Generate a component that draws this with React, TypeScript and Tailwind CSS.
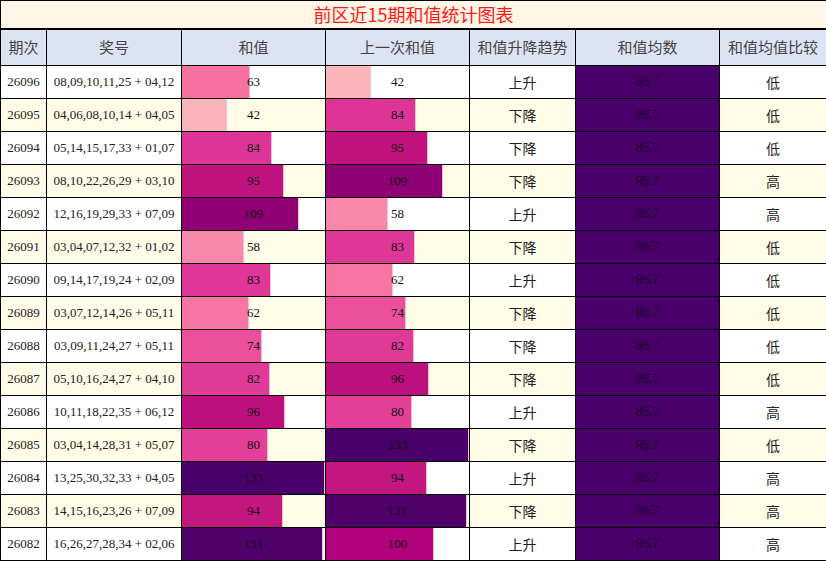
const ROWS: [string, string, number, number, string, string][] = [
  ['26096', '08,09,10,11,25 + 04,12', 63, 42, '上升', '低'],
  ['26095', '04,06,08,10,14 + 04,05', 42, 84, '下降', '低'],
  ['26094', '05,14,15,17,33 + 01,07', 84, 95, '下降', '低'],
  ['26093', '08,10,22,26,29 + 03,10', 95, 109, '下降', '高'],
  ['26092', '12,16,19,29,33 + 07,09', 109, 58, '上升', '高'],
  ['26091', '03,04,07,12,32 + 01,02', 58, 83, '下降', '低'],
  ['26090', '09,14,17,19,24 + 02,09', 83, 62, '上升', '低'],
  ['26089', '03,07,12,14,26 + 05,11', 62, 74, '下降', '低'],
  ['26088', '03,09,11,24,27 + 05,11', 74, 82, '下降', '低'],
  ['26087', '05,10,16,24,27 + 04,10', 82, 96, '下降', '低'],
  ['26086', '10,11,18,22,35 + 06,12', 96, 80, '上升', '高'],
  ['26085', '03,04,14,28,31 + 05,07', 80, 133, '下降', '低'],
  ['26084', '13,25,30,32,33 + 04,05', 133, 94, '上升', '高'],
  ['26083', '14,15,16,23,26 + 07,09', 94, 131, '下降', '高'],
  ['26082', '16,26,27,28,34 + 02,06', 131, 100, '上升', '高'],
]

const MAX = 133

// value -> colour stops, read off the chart
const STOPS: [number, number[]][] = [
  [42, [251, 180, 185]],
  [58, [249, 135, 171]],
  [63, [247, 113, 160]],
  [74, [236, 80, 157]],
  [84, [221, 52, 151]],
  [95, [192, 19, 127]],
  [100, [178, 2, 126]],
  [109, [143, 0, 117]],
  [120, [110, 1, 112]],
  [133, [73, 0, 106]],
]

function barColor(v: number): string {
  for (let i = 0; i < STOPS.length - 1; i++) {
    const [a, ca] = STOPS[i]
    const [b, cb] = STOPS[i + 1]
    if (v >= a && v <= b) {
      const t = (v - a) / (b - a)
      const c = ca.map((x, k) => Math.round(x + (cb[k] - x) * t))
      return `rgb(${c[0]},${c[1]},${c[2]})`
    }
  }
  return v < STOPS[0][0] ? 'rgb(251,180,185)' : 'rgb(73,0,106)'
}

const TD = 'border border-black p-0 text-center align-middle h-[33px]'
const TH = 'border border-black p-0 text-center align-middle h-[37px] bg-[#dce3f2] text-[15px] font-normal text-[#444]'

function BarCell({ value }: { value: number }) {
  return (
    <td className={TD}>
      <div className="relative h-[32px] flex items-center justify-center">
        <div
          className="absolute left-0 top-0 bottom-0 border-r border-[#f6bcd6]"
          style={{ width: `${(value / MAX) * 100}%`, backgroundColor: barColor(value) }}
        />
        <span className="relative text-[13px] text-[#111] [font-family:'Liberation_Serif',serif]">{value}</span>
      </div>
    </td>
  )
}

export default function App() {
  return (
    <div className="w-[826px] bg-white [font-family:'Noto_Sans_CJK_SC','Noto_Sans',sans-serif]">
      <table className="w-[826px] table-fixed border-collapse">
        <colgroup>
          <col className="w-[46px]" />
          <col className="w-[135px]" />
          <col className="w-[144px]" />
          <col className="w-[144px]" />
          <col className="w-[106px]" />
          <col className="w-[144px]" />
          <col className="w-[107px]" />
        </colgroup>
        <thead>
          <tr>
            <th
              colSpan={7}
              className="border border-b-2 border-black h-[28px] p-0 bg-[#fdf5e6] text-[18px] font-normal text-[#ff1a1a] leading-none"
            >
              前区近15期和值统计图表
            </th>
          </tr>
          <tr>
            <th className={TH}>期次</th>
            <th className={TH}>奖号</th>
            <th className={TH}>和值</th>
            <th className={TH}>上一次和值</th>
            <th className={TH}>和值升降趋势</th>
            <th className={TH}>和值均数</th>
            <th className={TH}>和值均值比较</th>
          </tr>
        </thead>
        <tbody>
          {ROWS.map(([issue, nums, sum, prev, trend, cmp], i) => {
            const bg = i % 2 === 1 ? 'bg-[#fffce8]' : 'bg-white'
            return (
              <tr key={issue} className={bg}>
                <td className={`${TD} text-[13px] text-[#222] [font-family:'Liberation_Serif',serif]`}>{issue}</td>
                <td className={`${TD} text-[13px] text-[#222] [font-family:'Liberation_Serif',serif]`}>{nums}</td>
                <BarCell value={sum} />
                <BarCell value={prev} />
                <td className={`${TD} text-[14px] text-[#222]`}>{trend}</td>
                <td className={`${TD} bg-[#49006a] text-[12px] text-[#18002a] [font-family:'Liberation_Sans',sans-serif]`}>85.7</td>
                <td className={`${TD} text-[14px] text-[#222]`}>{cmp}</td>
              </tr>
            )
          })}
        </tbody>
      </table>
    </div>
  )
}
